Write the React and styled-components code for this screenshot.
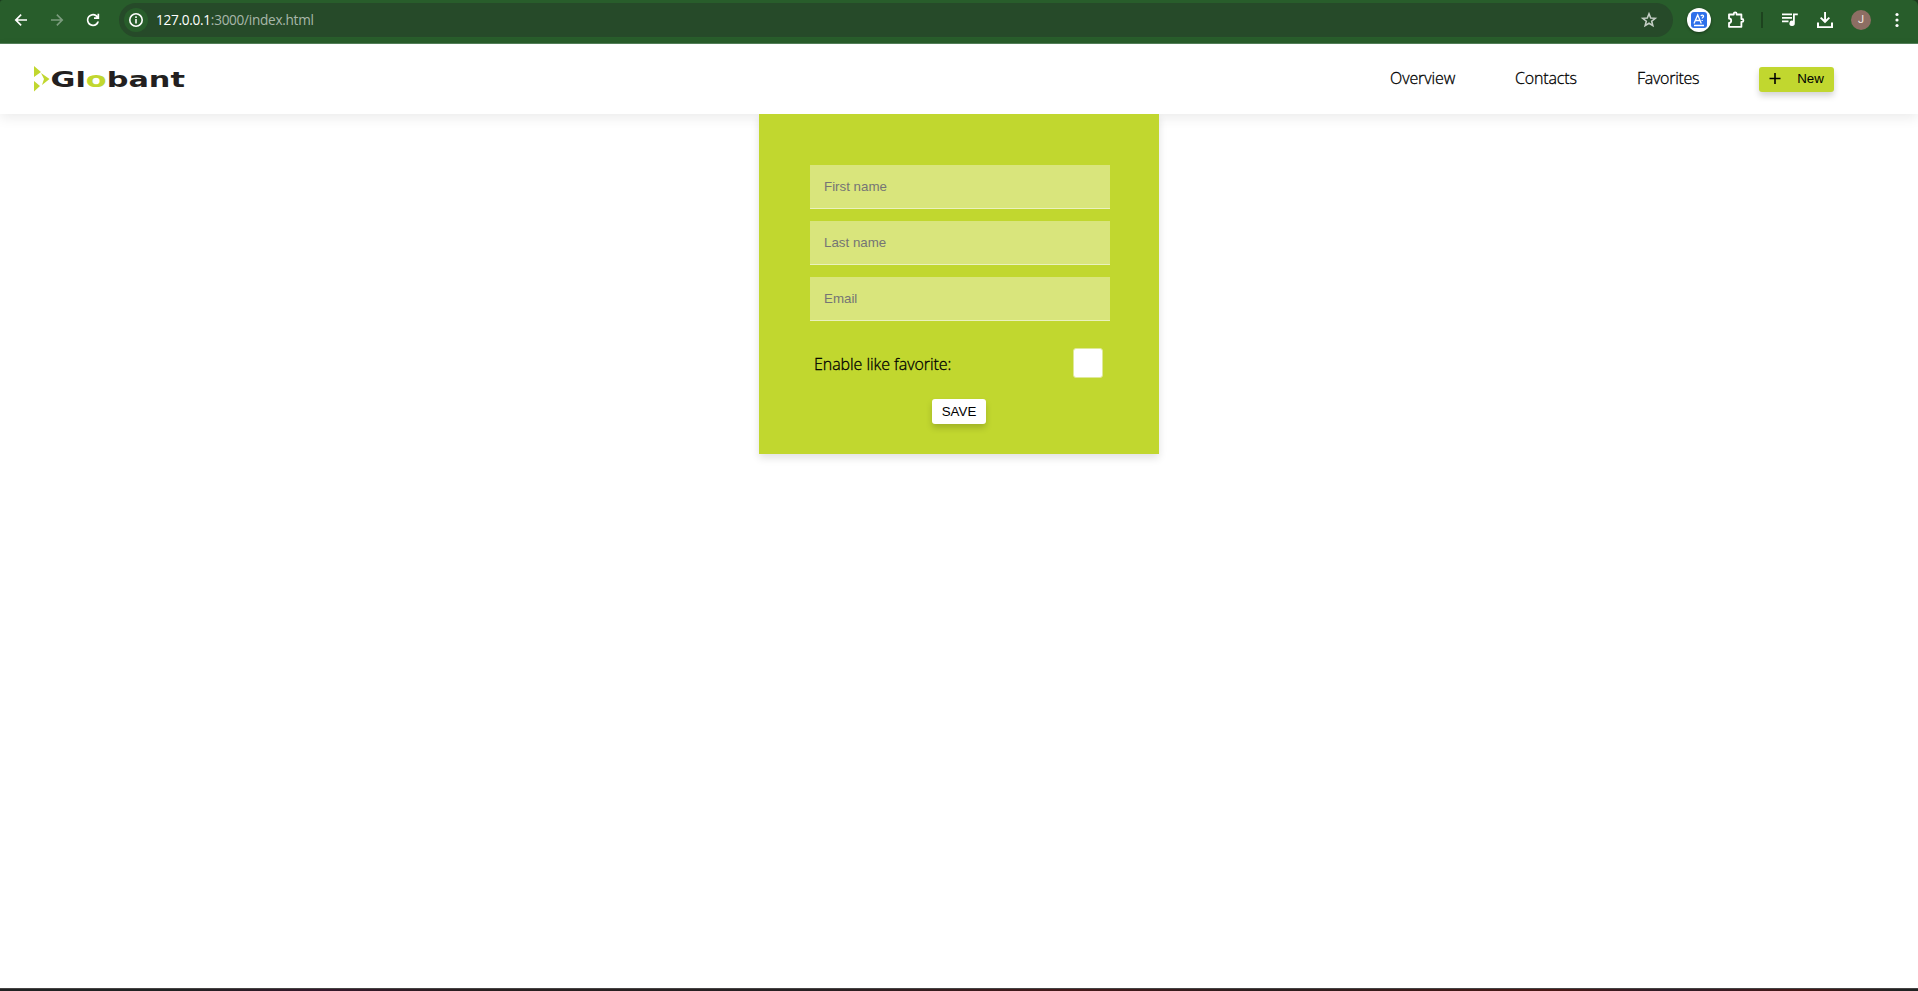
import React from 'react';
import styled, { createGlobalStyle } from 'styled-components';

const Global = createGlobalStyle`
  * { box-sizing: border-box; }
  html, body { margin: 0; background: #fff; overflow: hidden; }
`;
const Page = styled.div`
  height: 991px;
  display: flex;
  flex-direction: column;
  font-family: 'Open Sans', 'Noto Sans', sans-serif;
  color: #000;
`;
const BrowserFrame = styled.div`
  flex: none;
  background: linear-gradient(#1c3a1e 0 10px, #285d2b 10px);
`;
const BrowserBar = styled.div`
  height: 44px;
  display: flex;
  align-items: center;
  padding: 0 12px 4px 12px;
  background: #285d2b;
  border-bottom: 1px solid #54805a;
  border-radius: 3px 6px 0 0;
  color: #fff;
`;
const ToolIcon = styled.svg`
  width: 18px;
  height: 18px;
  flex: none;
  display: block;
  fill: ${p => p.$color || '#fff'};
  margin-left: ${p => p.$gap || 0}px;
`;
const AddressBar = styled.div`
  width: 1554px;
  height: 34px;
  margin-left: 17px;
  padding: 0 15px 0 5px;
  display: flex;
  align-items: center;
  border-radius: 17px;
  background: #264a29;
`;
const InfoBadge = styled.span`
  width: 24px;
  height: 24px;
  border-radius: 50%;
  background: #285d2b;
  display: grid;
  place-items: center;
`;
const Url = styled.span`
  flex: 1;
  margin-left: 8px;
  padding-top: 1px;
  font-size: 13.6px;
  line-height: 20px;
  letter-spacing: -0.28px;
  color: #a8b7a9;
`;
const Host = styled.span`
  color: #fff;
`;
const Extension = styled.span`
  width: 24px;
  height: 24px;
  margin-left: 14px;
  border-radius: 50%;
  background: #fff;
  display: grid;
  place-items: center;
  box-shadow: 0 1px 3px rgba(0, 0, 0, 0.4);
`;
const Divider = styled.span`
  width: 2px;
  height: 16px;
  margin-left: 16px;
  background: #1d431f;
`;
const Avatar = styled.span`
  width: 20px;
  height: 20px;
  margin-left: 17px;
  border-radius: 50%;
  background: #8d6e63;
  color: #f3e9e5;
  font: 11px/20px Roboto, sans-serif;
  text-align: center;
`;
const Header = styled.header`
  height: 70px;
  flex: none;
  display: flex;
  align-items: center;
  padding: 0 84px 0 34px;
  background: #fff;
  box-shadow: 0 4px 12px rgba(0, 0, 0, 0.08);
`;
const Logo = styled.svg`
  width: 152px;
  height: 26px;
  display: block;
`;
const Nav = styled.nav`
  margin-left: auto;
  display: flex;
  align-items: center;
  gap: 60px;
`;
const NavLink = styled.a`
  width: ${p => p.$width}px;
  padding-bottom: 2px;
  font-size: 16px;
  line-height: 22px;
  letter-spacing: ${p => p.$track || 0}px;
  white-space: nowrap;
  -webkit-text-stroke: 0.3px #000;
  font-weight: 300;
`;
const Button = styled.button`
  width: ${p => p.$width}px;
  height: 25px;
  padding: 0 ${p => p.$inset || 0}px 0 0;
  border: 0;
  border-radius: 3px;
  background: ${p => p.$fill};
  color: #000;
  display: flex;
  align-items: center;
  justify-content: center;
  gap: ${p => p.$gap || 0}px;
  font: 13.33px/16px 'Liberation Sans', Arial, sans-serif;
  letter-spacing: ${p => p.$track || 0}px;
  box-shadow: 0 4px 6px rgba(0, 0, 0, 0.17);
`;
const Main = styled.main`
  flex: 1;
  display: flex;
  justify-content: center;
  align-items: flex-start;
`;
const Form = styled.form`
  position: relative;
  width: 400px;
  height: 340px;
  padding: 51px 49px 0 51px;
  background: #c1d72f;
  box-shadow: 0 4px 8px rgba(0, 0, 0, 0.12);
  clip-path: inset(0 -20px -20px -20px);
  display: flex;
  flex-direction: column;
`;
const Field = styled.input`
  width: 300px;
  height: 44px;
  margin: 0 0 12px;
  padding: 0 14px;
  border: 0;
  border-bottom: 1px solid #eaf1bd;
  border-radius: 0;
  background: #d9e57c;
  font: 13.33px 'Liberation Sans', Arial, sans-serif;
  &::placeholder { color: #757575; opacity: 1; }
`;
const FavoriteRow = styled.label`
  height: 30px;
  margin-top: 15px;
  padding: 0 7px 0 4px;
  display: flex;
  align-items: center;
  justify-content: space-between;
  font-size: 16px;
  line-height: 22px;
`;
const FavoriteText = styled.span`
  padding-top: 2px;
  letter-spacing: -0.06px;
  font-weight: 300;
  -webkit-text-stroke: 0.3px #000;
`;
const Check = styled.span`
  width: 30px;
  height: 30px;
  border: 1px solid #dfe99a;
  border-radius: 3px;
  background: #fff;
`;
const Actions = styled.div`
  margin: 21px 0 0 -2px;
  display: flex;
  justify-content: center;
`;
const Taskbar = styled.div`
  height: 3px;
  flex: none;
  border-top: 1px solid #454343;
  background: linear-gradient(90deg, #202222 0, #202222 9%, #35172a 17%, #281f1f 25%, #262022 42%, #451819 56%, #2a1e1e 66%, #4a1714 81%, #2d1d28 87%, #471716 94%, #202222 99%);
`;

export default function App() {
  return (
    <Page>
      <Global />
      <BrowserFrame>
        <BrowserBar>
          <ToolIcon viewBox="3 3 18 18"><path d="M18 11.200H8.700l4-4L11.600 6l-6 6 6 6 1.100-1.200-4-4H18z" /></ToolIcon>
          <ToolIcon viewBox="3 3 18 18" $gap={18} $color="#7b9c7d"><path d="M6 11.200h9.300l-4-4L12.400 6l6 6-6 6-1.100-1.200 4-4H6z" /></ToolIcon>
          <ToolIcon viewBox="3 3 18 18" $gap={18}><path d="M12 18.200a6.200 6.200 0 1 1 4.500-10.500V5.700h1.700v5.200H13V9.200h2.500A4.500 4.500 0 1 0 16.200 13.500h1.800A6.200 6.200 0 0 1 12 18.200z" /></ToolIcon>
          <AddressBar>
            <InfoBadge>
              <ToolIcon viewBox="0 0 18 18">
                <circle cx="9" cy="9" r="6.200" fill="none" stroke="#fff" strokeWidth="1.600" />
                <rect x="8.200" y="8" width="1.600" height="4.500" />
                <rect x="8.200" y="5.300" width="1.600" height="1.700" />
              </ToolIcon>
            </InfoBadge>
            <Url><Host>127.0.0.1</Host>:3000/index.html</Url>
            <ToolIcon viewBox="0 0 18 18" $color="none">
              <path d="M9 2.800 10.700 7l4.500.300-3.500 2.900 1.100 4.400L9 12.200l-3.800 2.400 1.100-4.400L2.800 7.300 7.300 7z" stroke="#c4cec5" strokeWidth="1.600" />
            </ToolIcon>
          </AddressBar>
          <Extension>
            <ToolIcon viewBox="0 0 18 18">
              <rect x="1" y="1" width="16" height="16" rx="3" fill="#2e70ea" />
              <path d="M4 12.500 7.700 4l3.600 8.500M5.500 9.500h4.500M4 14.500h10M11 5.200c.2-1.600 2.700-1.400 2.500.2-.1 1-1.300 1-1.300 2.200M12.200 9v1" fill="none" stroke="#fff" strokeWidth="1.300" />
            </ToolIcon>
          </Extension>
          <ToolIcon viewBox="0 0 18 18" $gap={16} $color="none">
            <path d="M2 3.500h4.800V2.800a1.400 1.400 0 0 1 2.800 0v.7h4.800V8h.6a1.400 1.400 0 0 1 0 2.800h-.6v5H2v-3.900a2.200 2.200 0 0 0 0-4.400z" stroke="#fff" strokeWidth="1.800" strokeLinejoin="round" />
          </ToolIcon>
          <Divider />
          <ToolIcon viewBox="0 0 18 18" $gap={18}>
            <path d="M1 2.500h10v1.700H1zM1 6h10v1.700H1zM1 9.500h6.500v1.700H1zM12 2.500h4.800v1.800h-3v8a2.700 2.700 0 1 1-1.800-2.500z" />
          </ToolIcon>
          <ToolIcon viewBox="0 0 18 18" $gap={17}>
            <path d="M8.100 1h1.900v7.600l2.700-2.700 1.300 1.300L9 12.200 4 7.200l1.300-1.300 2.800 2.700zM1 11.500h2v3.700h12v-3.700h2V17H1z" />
          </ToolIcon>
          <Avatar>J</Avatar>
          <ToolIcon viewBox="0 0 18 18" $gap={17}>
            <circle cx="9" cy="3.500" r="1.600" /><circle cx="9" cy="9" r="1.600" /><circle cx="9" cy="14.500" r="1.600" />
          </ToolIcon>
        </BrowserBar>
      </BrowserFrame>
      <Header>
        <Logo viewBox="0 0 152 26">
          <path d="M0 0 7 6 0 11zM0 15l6 5-6 5.500zM7 7l8.500 6L8 19l2-6z" fill="#c1d72f" />
          <text x="16.500" y="21" textLength="134.500" lengthAdjust="spacingAndGlyphs" fontFamily="'DejaVu Sans', Verdana, sans-serif" fontWeight="700" fontSize="22" fill="#231f20">Gl<tspan fill="#c1d72f">o</tspan>bant</text>
        </Logo>
        <Nav>
          <NavLink $width={65} $track={-0.1}>Overview</NavLink>
          <NavLink $width={62} $track={-0.15}>Contacts</NavLink>
          <NavLink $width={62} $track={-0.27}>Favorites</NavLink>
          <Button $width={75} $gap={13} $inset={3} $fill="#c1d72f">
            <ToolIcon viewBox="0 0 18 18"><path d="M8.200 3h1.600v4.700h4.700v1.600H9.800V14H8.200V9.300H3.500V7.700h4.700z" fill="#000" /></ToolIcon>
            New
          </Button>
        </Nav>
      </Header>
      <Main>
        <Form>
          <Field placeholder="First name" />
          <Field placeholder="Last name" />
          <Field placeholder="Email" />
          <FavoriteRow>
            <FavoriteText>Enable like favorite:</FavoriteText>
            <Check />
          </FavoriteRow>
          <Actions>
            <Button type="button" $width={54} $fill="#fff">SAVE</Button>
          </Actions>
        </Form>
      </Main>
      <Taskbar />
    </Page>
  );
}
